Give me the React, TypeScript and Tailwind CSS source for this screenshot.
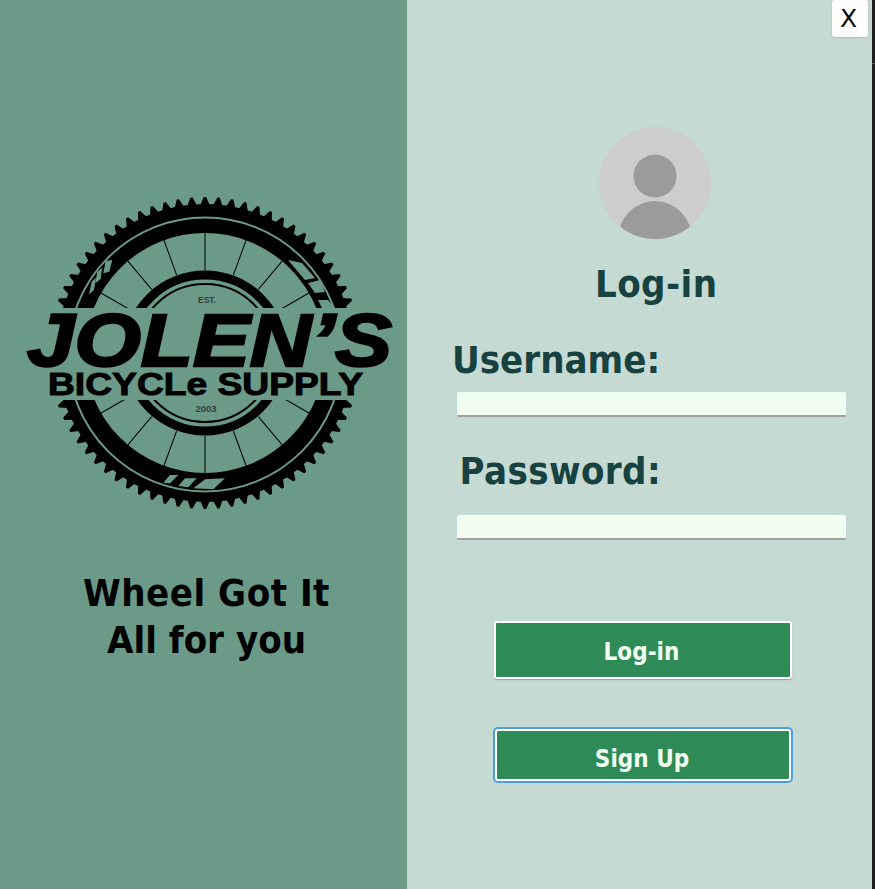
const GREEN = "#6b9b88";
const teeth = Array.from({ length: 72 }, (_, i) => (i * 360) / 72);
const spokes = [-60, -40, -20, 0, 20, 40, 60, 120, 140, 160, 180, 200, 220, 240];
const treads = [
  "288,80 302,83 315,98 305,100",
  "308,103 320,100 325,112 315,113",
  "318,120 328,120 335,128 322,128",
  "105.7,81 112.3,80 109.3,91.7 103.3,93.3",
  "97.3,91.7 102,87.7 100.7,99 95.3,103.3",
  "91.7,101.7 96,97.7 94,110 89,114.3",
  "170,295 178.3,295 170,303.3 163.3,302.7",
  "185,298.3 196.7,298.3 188.3,307.3 178.3,306",
  "205,299.3 225,298.3 213.3,309.3 193.3,308.3",
];

function Logo() {
  return (
    <svg viewBox="0 0 407 340" className="block h-[340px] w-[407px]">
      <g transform="translate(205 173)">
        {teeth.map((a) => (
          <polygon key={a} points="-5.5,-146 -1.2,-156 1.2,-156 5.5,-146" fill="#000" transform={`rotate(${a})`} />
        ))}
        <circle r="134.5" fill="none" stroke="#000" strokeWidth="29" />
        <circle cy="1.5" r="137" fill="none" stroke={GREEN} strokeWidth="2" />
      </g>
      {treads.map((p) => (
        <polygon key={p} points={p} fill={GREEN} />
      ))}
      <g transform="translate(205 173)">
        {spokes.map((a) => (
          <line key={a} x1="0" y1="-120" x2="0" y2="-83" stroke="#000" strokeWidth="1" transform={`rotate(${a})`} />
        ))}
        <circle r="78" fill="none" stroke="#000" strokeWidth="9" />
        <circle r="69" fill="none" stroke="#000" strokeWidth="2" />
        <rect x="-205" y="-45" width="407" height="92" fill={GREEN} />
        <text x="2" y="-50" textAnchor="middle" fontSize="8.5" fontWeight="700" fontFamily="Liberation Sans, sans-serif" fill="#2c3f38">EST.</text>
        <text x="1" y="59" textAnchor="middle" fontSize="9.5" fontWeight="700" fontFamily="Liberation Sans, sans-serif" fill="#2c3f38">2003</text>
        <text x="-178" y="13" textLength="365" lengthAdjust="spacingAndGlyphs" fontSize="75" fontWeight="700" fontStyle="italic" fontFamily="Liberation Sans, sans-serif" fill="#000" stroke="#000" strokeWidth="2.5">JOLEN’S</text>
        <text x="-157" y="42" textLength="315" lengthAdjust="spacingAndGlyphs" fontSize="31" fontWeight="700" fontFamily="Liberation Sans, sans-serif" fill="#000" stroke="#000" strokeWidth="1">BICYCLe SUPPLY</text>
      </g>
    </svg>
  );
}

function Avatar() {
  return (
    <svg viewBox="0 0 112 112" className="block h-[112px] w-[112px]">
      <defs>
        <clipPath id="avatar-clip">
          <circle cx="56" cy="56" r="56" />
        </clipPath>
      </defs>
      <circle cx="56" cy="56" r="56" fill="#cdcdcd" />
      <circle cx="56" cy="49" r="21.5" fill="#9b9b9b" />
      <ellipse cx="56" cy="112" rx="37" ry="38" fill="#9b9b9b" clipPath="url(#avatar-clip)" />
    </svg>
  );
}

export default function App() {
  return (
    <div className="flex h-[889px] w-[875px] overflow-hidden bg-[#1e1e1e] font-['DejaVu_Sans_Condensed','DejaVu_Sans',sans-serif]">
      <div className="flex w-[407px] shrink-0 flex-col items-center bg-[#6b9b88] pt-[180px]">
        <Logo />
        <div className="mt-[50px] ml-[6px] text-center text-[38px] leading-[47px] font-bold text-black">
          <p className="tracking-[0.5px]">Wheel Got It</p>
          <p>All for you</p>
        </div>
      </div>
      <div className="relative flex w-[465px] flex-col bg-[#c5dad3] pt-[127px]">
        <button className="absolute top-0 right-[4px] h-[37px] w-[36px] rounded-[3px] bg-white pr-[3px] font-['DejaVu_Sans',sans-serif] text-[25px] text-black shadow-sm">X</button>
        <div className="ml-[192px]">
          <Avatar />
        </div>
        <h1 className="mt-[20px] ml-[188px] text-[38px] leading-[50px] font-bold tracking-[0.4px] text-[#17423f]">Log-in</h1>
        <label className="mt-[26px] ml-[45px] w-[209px] text-[38px] leading-[50px] font-bold text-[#17423f]">Username:</label>
        <input className="mt-[7px] ml-[50px] h-[25px] w-[389px] rounded-[2px] border-b-2 border-b-[#a0a0a0] bg-[#f0fff0]" />
        <label className="mt-[29px] ml-[45px] w-[209px] text-right text-[38px] leading-[50px] font-bold tracking-[0.4px] text-[#17423f]">Password:</label>
        <input className="mt-[19px] ml-[50px] h-[25px] w-[389px] rounded-[2px] border-b-2 border-b-[#a0a0a0] bg-[#f0fff0]" />
        <button className="mt-[81px] ml-[87px] h-[58px] w-[298px] rounded-[3px] border-2 border-white bg-[#2e8b57] pt-[4px] pr-[3px] text-[24px] font-bold text-[#f0fff0] shadow-[0_1px_1px_rgba(0,0,0,0.25)]">Log-in</button>
        <button className="mt-[50px] ml-[88px] h-[52px] w-[296px] rounded-[3px] border-2 border-white bg-[#2e8b57] pt-[8px] pr-[2px] text-[24px] font-bold text-[#f0fff0] shadow-[0_0_0_2px_#4a9fe0]">Sign Up</button>
      </div>
      <div className="h-[64px] w-[3px] border-b border-b-[#5a5a5a]" />
    </div>
  );
}
